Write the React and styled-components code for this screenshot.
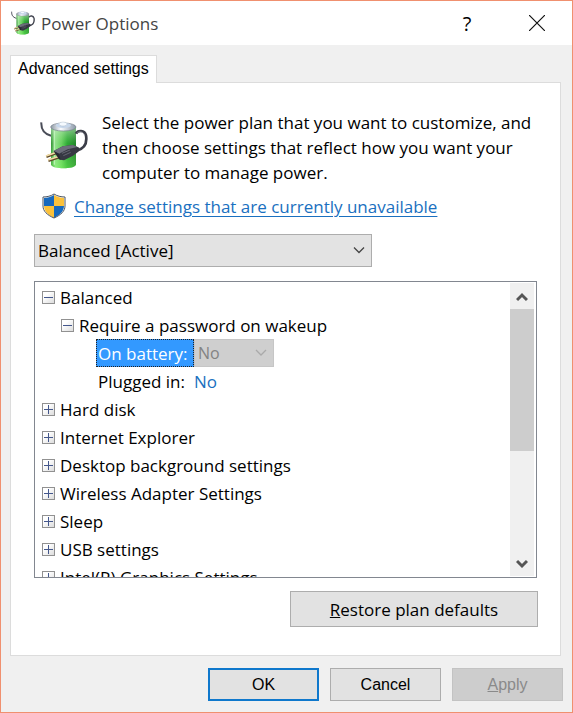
import React, { useState } from 'react';
import styled, { createGlobalStyle } from 'styled-components';

const GlobalStyle = createGlobalStyle`
  * {
    box-sizing: border-box;
  }
  body {
    margin: 0;
    background: #f0f0f0;
    color: #000;
    font-family: 'Open Sans', 'Noto Sans', sans-serif;
    font-size: 17px;
  }
  button,
  select {
    font: inherit;
    color: inherit;
    border-radius: 0;
    margin: 0;
  }
`;

const Dialog = styled.main`
  display: flex;
  flex-direction: column;
  min-height: 100vh;
  border: 1px solid #f0906f;
`;

const TitleBar = styled.header`
  display: flex;
  align-items: center;
  height: 44px;
  padding: 0 11px 0 10px;
  background: #fff;
  h1 {
    flex: 1;
    margin: 0 0 0 6px;
    font-size: 17px;
    font-weight: 400;
    color: #444;
  }
`;

const TitleButton = styled.button`
  display: flex;
  align-items: center;
  justify-content: center;
  width: ${({ $wide }) => ($wide ? '48px' : '24px')};
  margin-right: ${({ $wide }) => ($wide ? '0' : '34px')};
  height: 32px;
  padding: 0;
  border: 0;
  background: none;
  font-size: 20px;
`;

const Tabs = styled.div`
  display: flex;
  padding: 10px 9px 0;
`;

const Tab = styled.button`
  position: relative;
  z-index: 1;
  height: 28px;
  margin-bottom: -1px;
  padding: 0 7px 2px;
  border: 1px solid #dcdcdc;
  border-bottom: 0;
  background: #fff;
  font-family: 'Liberation Sans', sans-serif;
  font-size: 16px;
`;

const Panel = styled.section`
  flex: 1;
  display: flex;
  flex-direction: column;
  margin: 0 11px 0 9px;
  padding: 27px 23px 28px;
  border: 1px solid #dcdcdc;
  background: #fff;
`;

const Intro = styled.div`
  display: flex;
  gap: 14px;
  padding-left: 6px;
  svg {
    flex: none;
    margin-top: 11px;
  }
  p {
    margin: 0;
    line-height: 25px;
  }
`;

const ShieldRow = styled.div`
  display: flex;
  align-items: center;
  gap: 8px;
  height: 26px;
  margin: 8px 0 15px;
  padding-left: 8px;
  a {
    color: #1a70c0;
    text-underline-offset: 3px;
    text-decoration-thickness: 1px;
  }
`;

const SelectBox = styled.div`
  position: relative;
  width: ${({ $small }) => ($small ? '80px' : '338px')};
  max-width: 100%;
  height: ${({ $small }) => ($small ? '28px' : '33px')};
  color: ${({ $small }) => ($small ? '#838383' : '#000')};
  font-size: ${({ $small }) => ($small ? '16px' : '17px')};
  select {
    appearance: none;
    width: 100%;
    height: 100%;
    padding: 0 24px 0 3px;
    border: 1px solid ${({ $small }) => ($small ? '#c6c6c6' : '#adadad')};
    background: ${({ $small }) => ($small ? '#cfcfcf' : '#e3e3e3')};
    opacity: 1;
  }
  svg {
    position: absolute;
    top: 0;
    right: 7px;
    height: 100%;
    pointer-events: none;
  }
`;

const TreeBox = styled.div`
  display: flex;
  height: 297px;
  margin-top: 14px;
  padding-right: 2px;
  border: 1px solid #828790;
`;

const Tree = styled.ul`
  flex: 1;
  margin: 0;
  padding: 1px 0 0 7px;
  overflow: hidden;
  list-style: none;
`;

const TreeItem = styled.li`
  display: flex;
  align-items: center;
  height: 28px;
  padding-left: ${({ $level }) => [0, 19, 54][$level]}px;
  white-space: nowrap;
`;

const Expander = styled.button`
  display: flex;
  flex: none;
  width: 13px;
  height: 13px;
  margin-right: 5px;
  padding: 0;
  border: 1px solid #919191;
  background: linear-gradient(135deg, #fff 30%, #dcdcdc);
`;

const SettingLabel = styled.label`
  display: flex;
  align-items: center;
  width: 98px;
  height: 28px;
  padding-left: 1px;
  border: 1px dotted ${({ $selected }) => ($selected ? '#222' : 'transparent')};
  background: ${({ $selected }) => ($selected ? '#3399ff' : 'none')};
  color: ${({ $selected }) => ($selected ? '#fff' : 'inherit')};
`;

const ValueLink = styled.a`
  color: #1a70c0;
  text-decoration: none;
`;

const Scrollbar = styled.div`
  display: flex;
  flex-direction: column;
  width: 24px;
  margin: 1px 0;
  background: #f0f0f0;
`;

const ScrollButton = styled.button`
  display: flex;
  align-items: center;
  justify-content: center;
  height: 26px;
  padding: 2px 0 0;
  border: 0;
  background: none;
`;

const ScrollTrack = styled.div`
  flex: 1;
  &::before {
    content: '';
    display: block;
    height: 142px;
    background: #cdcdcd;
  }
`;

const Button = styled.button`
  width: ${({ $wide }) => ($wide ? '248px' : '111px')};
  height: ${({ $wide }) => ($wide ? '36px' : '33px')};
  padding: 0;
  border: ${({ $primary }) => ($primary ? '2px solid #0f78cc' : '1px solid #adadad')};
  background: #e2e2e2;
  font-family: ${({ $wide }) => ($wide ? 'inherit' : "'Liberation Sans', sans-serif")};
  font-size: ${({ $wide }) => ($wide ? '17px' : '16px')};
  &:disabled {
    border-color: #c3c3c3;
    background: #cdcdcd;
    color: #8a8a8a;
  }
`;

const PanelActions = styled.div`
  display: flex;
  justify-content: flex-end;
  margin: 13px -1px 0 0;
`;

const Footer = styled.footer`
  display: flex;
  justify-content: flex-end;
  gap: 11px;
  padding: 12px 9px 11px;
`;

const BatteryIcon = ({ size }) => (
  <svg width={size} height={size} viewBox="0 0 144 144" aria-hidden="true">
    <defs>
      <linearGradient id="cell" x1="0" x2="1">
        <stop offset="0" stopColor="#278c2c" />
        <stop offset=".18" stopColor="#8fe08a" />
        <stop offset=".42" stopColor="#62cf5a" />
        <stop offset=".65" stopColor="#22a52c" />
        <stop offset="1" stopColor="#147a20" />
      </linearGradient>
      <linearGradient id="glow" x1="0" x2="0" y1="0" y2="1">
        <stop offset="0" stopColor="#d6ead6" stopOpacity=".6" />
        <stop offset=".4" stopColor="#9be68d" stopOpacity=".1" />
        <stop offset="1" stopColor="#8bff68" stopOpacity=".4" />
      </linearGradient>
      <linearGradient id="cap" x1="0" x2="1">
        <stop offset="0" stopColor="#8d98a3" />
        <stop offset=".4" stopColor="#fafcff" />
        <stop offset="1" stopColor="#8b98a8" />
      </linearGradient>
    </defs>
    <path d="M4 4C3 22 9 38 33 44" fill="none" stroke="#4a4d58" strokeWidth="6" />
    <path d="M33 19v112c5 14 70 14 75 0V19z" fill="url(#cell)" />
    <path d="M33 19v112c5 14 70 14 75 0V19z" fill="url(#glow)" />
    <path d="M43 28v103" stroke="#d6ffd0" strokeWidth="4" opacity=".65" />
    <ellipse cx="70" cy="18" rx="38" ry="12" fill="url(#cap)" stroke="#77818c" strokeWidth="2" />
    <ellipse cx="70" cy="13" rx="23" ry="8" fill="#c7d7eb" />
    <ellipse cx="69" cy="9" rx="12" ry="6" fill="#f5faff" stroke="#99a9bc" />
    <path d="M108 38c5-11 26-12 30 5 4 24-4 40-28 46" fill="none" stroke="#3b3d48" strokeWidth="8" />
    <path d="M110 37c8-9 20-5 24 6" fill="none" stroke="#8c8f9b" strokeWidth="2" />
    <path d="M19 107l36-13M25 119l36-12" stroke="#5f4a28" strokeWidth="8" />
    <path d="M18 105l36-13M24 117l36-12" stroke="#f1dca6" strokeWidth="5" />
    <path d="M41 90l27-14 31-4 19 8-3 12-16 12-27 14-12-2z" fill="#363843" />
    <path d="M41 90l27-14 31-4 13 6-29 7-26 13z" fill="#6c6e7b" />
    <path d="M41 90l16 8 5 18-5-1z" fill="#262831" />
    <path d="M66 97l24-10M70 104l22-10" stroke="#7b7d89" strokeWidth="2" />
  </svg>
);

const ShieldIcon = () => (
  <svg width="24" height="26" viewBox="0 0 24 26" aria-hidden="true">
    <defs>
      <clipPath id="shield">
        <path d="M12 2C9 4 5 5 2 5v8c0 5 4 9 10 12 6-3 10-7 10-12V5c-3 0-7-1-10-3z" />
      </clipPath>
    </defs>
    <g clipPath="url(#shield)">
      <path d="M0 0h12v13H0zM12 13h12v13H12z" fill="#1769bd" />
      <path d="M12 0h12v13H12zM0 13h12v13H0z" fill="#fbc13a" />
    </g>
    <path
      d="M12 1C9 3 5 4 1 4v9c0 5 4 9 11 12 7-3 11-7 11-12V4c-4 0-8-1-11-3z"
      fill="none"
      stroke="#4b5561"
    />
  </svg>
);

const Chevron = ({ color }) => (
  <svg width="12" height="8" viewBox="0 0 12 8" aria-hidden="true">
    <path d="M1 1l5 5 5-5" fill="none" stroke={color} strokeWidth="1.300" />
  </svg>
);

const ScrollArrow = ({ up }) => (
  <svg width="12" height="10" viewBox="0 0 12 10" aria-hidden="true">
    <path d={up ? 'M1 8l5-5 5 5' : 'M1 2l5 5 5-5'} fill="none" stroke="#555" strokeWidth="3" />
  </svg>
);

const ExpandButton = ({ open, name }) => (
  <Expander type="button" aria-label={name} aria-expanded={open}>
    <svg width="11" height="11" viewBox="0 0 11 11" shapeRendering="crispEdges">
      <path d={open ? 'M1 5.500h9' : 'M1 5.500h9M5.500 1v9'} stroke="#44578c" />
    </svg>
  </Expander>
);

const groups = [
  'Hard disk',
  'Internet Explorer',
  'Desktop background settings',
  'Wireless Adapter Settings',
  'Sleep',
  'USB settings',
  'Intel(R) Graphics Settings',
];

const App = () => {
  const [plan, setPlan] = useState('balanced');

  return (
    <>
      <GlobalStyle />
      <Dialog>
        <TitleBar>
          <BatteryIcon size={24} />
          <h1>Power Options</h1>
          <TitleButton type="button">?</TitleButton>
          <TitleButton type="button" $wide aria-label="Close">
            <svg width="16" height="16" viewBox="0 0 16 16">
              <path d="M0 0l16 16M16 0L0 16" stroke="#111" strokeWidth="1.200" />
            </svg>
          </TitleButton>
        </TitleBar>

        <Tabs role="tablist">
          <Tab type="button" role="tab" aria-selected="true">
            Advanced settings
          </Tab>
        </Tabs>

        <Panel role="tabpanel">
          <Intro>
            <BatteryIcon size={48} />
            <p>
              Select the power plan that you want to customize, and then choose settings that
              reflect how you want your computer to manage power.
            </p>
          </Intro>
          <ShieldRow>
            <ShieldIcon />
            <a href="#unlock">Change settings that are currently unavailable</a>
          </ShieldRow>

          <SelectBox>
            <select aria-label="Power plan" value={plan} onChange={e => setPlan(e.target.value)}>
              <option value="balanced">Balanced [Active]</option>
            </select>
            <Chevron color="#444" />
          </SelectBox>

          <TreeBox>
            <Tree>
              <TreeItem $level={0}>
                <ExpandButton open name="Balanced" />
                Balanced
              </TreeItem>
              <TreeItem $level={1}>
                <ExpandButton open name="Require a password on wakeup" />
                Require a password on wakeup
              </TreeItem>
              <TreeItem $level={2}>
                <SettingLabel $selected htmlFor="battery">
                  On battery:
                </SettingLabel>
                <SelectBox $small>
                  <select id="battery" disabled>
                    <option>No</option>
                  </select>
                  <Chevron color="#aaa" />
                </SelectBox>
              </TreeItem>
              <TreeItem $level={2}>
                <SettingLabel as="span">Plugged in:</SettingLabel>
                <ValueLink href="#plugged">No</ValueLink>
              </TreeItem>
              {groups.map(group => (
                <TreeItem key={group} $level={0}>
                  <ExpandButton open={false} name={group} />
                  {group}
                </TreeItem>
              ))}
            </Tree>
            <Scrollbar>
              <ScrollButton type="button" aria-label="Scroll up">
                <ScrollArrow up />
              </ScrollButton>
              <ScrollTrack />
              <ScrollButton type="button" aria-label="Scroll down">
                <ScrollArrow />
              </ScrollButton>
            </Scrollbar>
          </TreeBox>

          <PanelActions>
            <Button type="button" $wide>
              <u>R</u>estore plan defaults
            </Button>
          </PanelActions>
        </Panel>

        <Footer>
          <Button type="button" $primary>
            OK
          </Button>
          <Button type="button">Cancel</Button>
          <Button type="button" disabled>
            <u>A</u>pply
          </Button>
        </Footer>
      </Dialog>
    </>
  );
};

export default App;
